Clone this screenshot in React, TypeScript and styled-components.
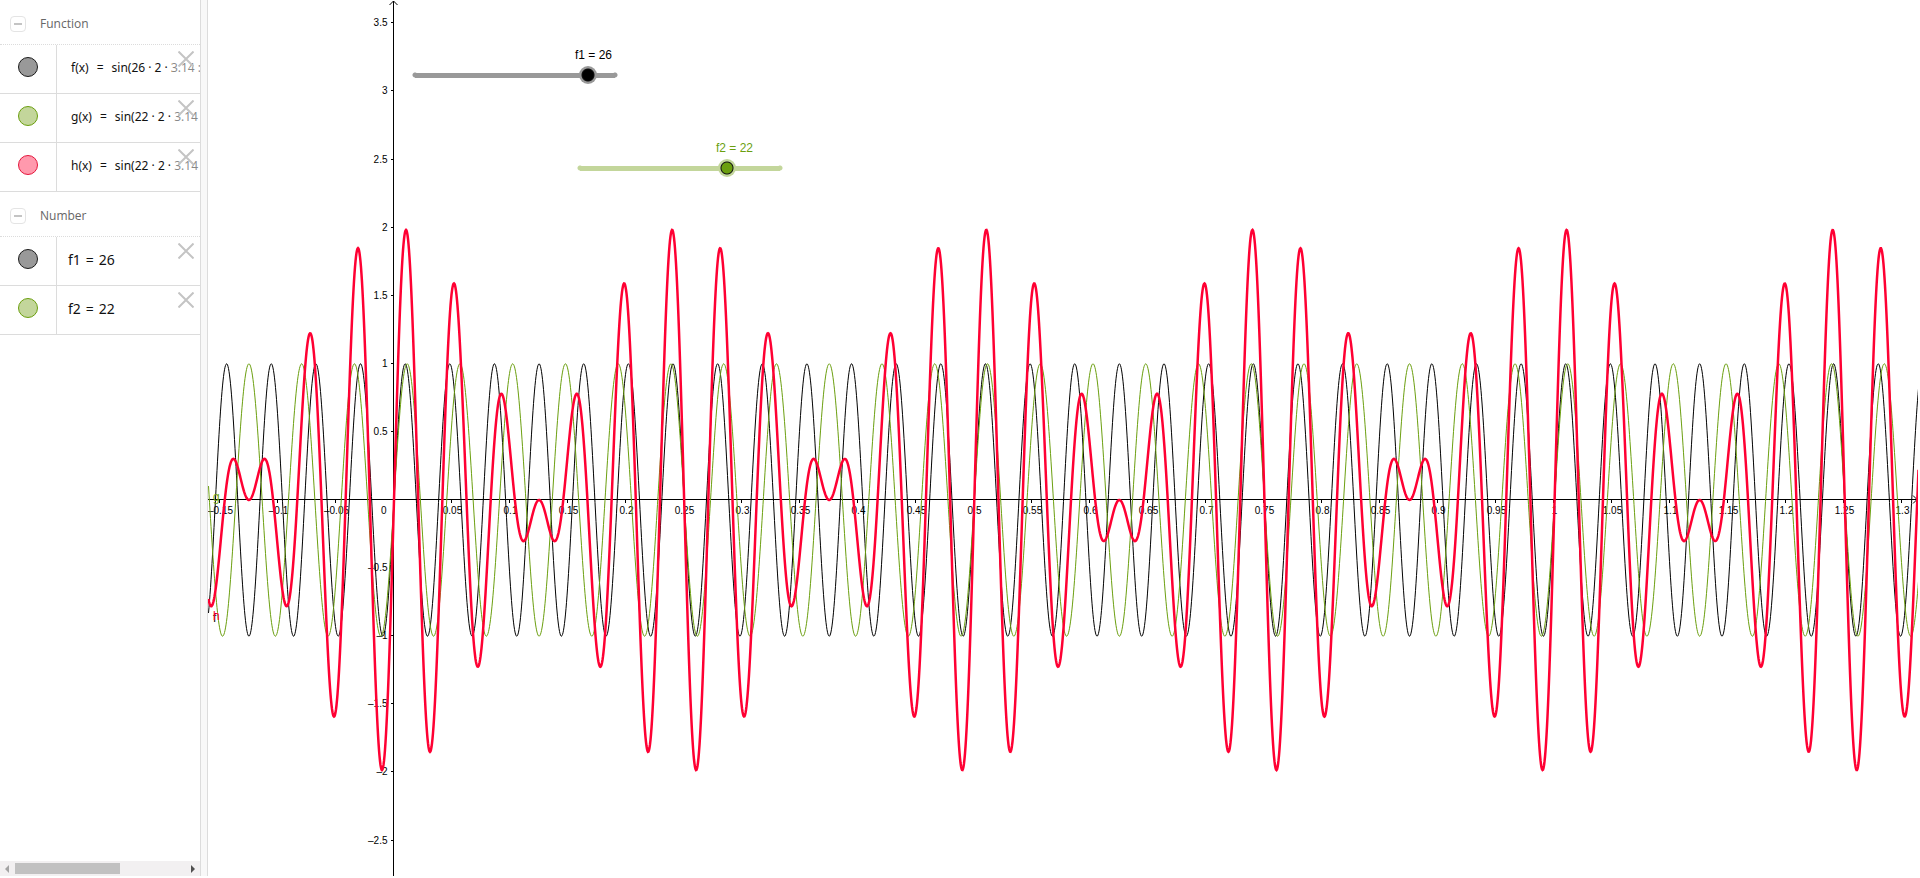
import React, { useEffect, useRef, useState } from "react";
import styled, { createGlobalStyle } from "styled-components";

const GlobalStyle = createGlobalStyle`
  *, *::before, *::after { box-sizing: border-box; }
  body { margin: 0; background: #fff; overflow: hidden; }
`;

const Page = styled.div`
  display: flex;
  height: 100vh;
  padding: 0 2px 2px 0;
  color: #111;
  font-family: "Noto Sans", "Open Sans", sans-serif;
`;

const AlgebraPanel = styled.aside`
  display: flex;
  flex-direction: column;
  justify-content: space-between;
  width: 200px;
  flex: none;
  overflow: hidden;
`;

const Divider = styled.div`
  width: 8px;
  flex: none;
  background: #f8f8f8;
  border: solid #dcdcdc;
  border-width: 0 1px;
`;

const GroupHeader = styled.h2`
  display: flex;
  align-items: center;
  gap: 14px;
  height: 45px;
  margin: 0;
  padding: 4px 0 0 10px;
  border-bottom: 1px dotted #dcdcdc;
  font-family: "Open Sans", sans-serif;
  font-size: 12px;
  line-height: 16px;
  font-weight: 400;
  color: #666;
`;

const CollapseButton = styled.button`
  display: flex;
  align-items: center;
  justify-content: center;
  width: 16px;
  height: 16px;
  padding: 0;
  background: #fff;
  border: 1px solid #e4e4e4;
  border-radius: 4px;

  &::before {
    content: "";
    width: 8px;
    height: 2px;
    background: #c4c4c4;
  }
`;

const List = styled.ul`
  margin: 0;
  padding: 0;
  list-style: none;
`;

const Row = styled.li`
  position: relative;
  display: flex;
  height: 49px;
  border-bottom: 1px solid #dcdcdc;
`;

const MarbleCell = styled.div`
  display: flex;
  align-items: center;
  justify-content: center;
  width: 57px;
  flex: none;
  border-right: 1px solid #dcdcdc;
  padding-bottom: 4px;
`;

const Marble = styled.button<{ $fill: string; $line: string }>`
  width: 20px;
  height: 20px;
  padding: 0;
  border-radius: 50%;
  background: ${(p) => p.$fill};
  border: 1px solid ${(p) => p.$line};
`;

const Formula = styled.div<{ $small?: boolean }>`
  display: flex;
  align-items: center;
  gap: ${(p) => (p.$small ? 8 : 5)}px;
  padding: 0 0 4px ${(p) => (p.$small ? 14 : 11)}px;
  font-size: ${(p) => (p.$small ? 12 : 14)}px;
  white-space: nowrap;
`;

const CloseButton = styled.button`
  position: absolute;
  top: 0;
  right: 0;
  display: flex;
  align-items: center;
  justify-content: center;
  width: 28px;
  height: 48px;
  padding: 0 0 20px;
  border: 0;
  background: rgba(255, 255, 255, 0.5);
`;

const ScrollTrack = styled.div`
  display: flex;
  align-items: center;
  justify-content: space-between;
  height: 15px;
  padding: 0 5px;
  background: #f2f0f1;
`;

const ScrollThumb = styled.div`
  width: 55%;
  height: 11px;
  margin-left: 6px;
  margin-right: auto;
  background: #c1c1c1;
`;

const Graphics = styled.main`
  position: relative;
  flex: 1;
  min-width: 0;
  overflow: hidden;
`;

const Plot = styled.svg`
  display: block;
  width: 100%;
  height: 100%;
  font-family: "Liberation Sans", Arial, sans-serif;
`;

const SliderBox = styled.label<{ $x: number; $y: number; $color: string }>`
  position: absolute;
  left: ${(p) => p.$x}px;
  top: ${(p) => p.$y}px;
  width: 218px;
  height: 38px;
  color: ${(p) => p.$color};
  font: 12px/16px "Liberation Sans", Arial, sans-serif;
`;

const SliderText = styled.span<{ $indent: number }>`
  display: block;
  padding-left: ${(p) => p.$indent}px;
  padding-bottom: 3px;
  white-space: nowrap;
`;

const Range = styled.input<{ $track: string; $ring: string; $dot: string }>`
  appearance: none;
  display: block;
  width: 218px;
  height: 18px;
  margin: 0;
  background: transparent;

  &::-webkit-slider-runnable-track {
    height: 18px;
    background:
      radial-gradient(circle at 9px 9px, ${(p) => p.$track} 2px, transparent 3px),
      radial-gradient(circle at 209px 9px, ${(p) => p.$track} 2px, transparent 3px),
      linear-gradient(${(p) => p.$track}, ${(p) => p.$track}) center / 200px 5px no-repeat;
  }

  &::-webkit-slider-thumb {
    appearance: none;
    width: 18px;
    height: 18px;
    border-radius: 50%;
    background: radial-gradient(circle, ${(p) => p.$dot} 5px, #111 6px, ${(p) => p.$ring} 7px);
  }
`;

const ORIGIN_X = 185.5;
const ORIGIN_Y = 499.5;
const UNIT_X = 1160;
const UNIT_Y = 136.2;
const STEP_X = 58;

const wave = (freq: number) => (x: number) => Math.sin(freq * 2 * 3.14 * x);

function curve(fn: (x: number) => number, width: number) {
  const points: string[] = [];
  for (let px = 0; px <= width; px += 0.5) {
    const y = ORIGIN_Y - fn((px - ORIGIN_X) / UNIT_X) * UNIT_Y;
    points.push(`${px} ${y.toFixed(2)}`);
  }
  return "M" + points.join("L");
}

const label = (n: number) => String(Number(n.toFixed(2))).replace("-", "–");
const rowOf = (i: number) => Math.floor(ORIGIN_Y - (i * UNIT_Y) / 2);

function Axes({ width, height }: { width: number; height: number }) {
  const xs: number[] = [];
  for (let i = Math.ceil(-ORIGIN_X / STEP_X); ORIGIN_X + i * STEP_X < width; i++) if (i) xs.push(i);
  const ys: number[] = [];
  for (let i = -Math.floor((height - ORIGIN_Y) / (UNIT_Y / 2)); rowOf(i) > 8; i++) if (i) ys.push(i);
  const right = width - 1;
  return (
    <g stroke="#000" fill="none" shapeRendering="crispEdges">
      <path d={`M0 ${ORIGIN_Y}H${right}M${ORIGIN_X} 1V${height}`} />
      <path
        d={`M${right - 4} ${ORIGIN_Y - 4}l4 4l-4 4M${ORIGIN_X - 4} 5l4 -4l4 4`}
        shapeRendering="auto"
      />
      {xs.map((i) => (
        <path key={i} d={`M${ORIGIN_X + i * STEP_X} ${ORIGIN_Y}v3`} />
      ))}
      {ys.map((i) => (
        <path key={i} d={`M${ORIGIN_X} ${rowOf(i) + 0.5}h-3`} />
      ))}
      <g stroke="none" fill="#000" fontSize="10">
        {xs.map((i) => (
          <text key={i} x={ORIGIN_X + i * STEP_X + 1} y={514} textAnchor="middle">
            {label(i * 0.05)}
          </text>
        ))}
        <text x={ORIGIN_X - 7} y={514} textAnchor="end">0</text>
        {ys.map((i) => (
          <text key={i} x={ORIGIN_X - 6} y={rowOf(i) + 4} textAnchor="end">
            {label(i * 0.5)}
          </text>
        ))}
      </g>
    </g>
  );
}

function Close({ name }: { name: string }) {
  return (
    <CloseButton aria-label={`Delete ${name}`}>
      <svg width="16" height="16" viewBox="0 0 16 16" stroke="#c4c4c4" strokeWidth="2">
        <path d="M0.500 0.500L15.500 15.500M15.500 0.500L0.500 15.500" />
      </svg>
    </CloseButton>
  );
}

const BLACK = { fill: "#999", line: "#1c1c1c" };
const GREEN = { fill: "#c3d69b", line: "#6b9f0f" };
const RED = { fill: "#ff99ad", line: "#e4173c" };

function Group({ title, children }: { title: string; children: React.ReactNode }) {
  return (
    <section>
      <GroupHeader>
        <CollapseButton aria-label={`Collapse ${title}`} />
        <span>{title}</span>
      </GroupHeader>
      <List>{children}</List>
    </section>
  );
}

interface ItemProps {
  name: string;
  tone: typeof BLACK;
  left: string;
  right: string;
  small?: boolean;
}

function Item({ name, tone, left, right, small }: ItemProps) {
  return (
    <Row>
      <MarbleCell>
        <Marble $fill={tone.fill} $line={tone.line} aria-label={`Show ${name}`} />
      </MarbleCell>
      <Formula $small={small}>
        <span>{left}</span>
        <span>=</span>
        <span>{right}</span>
      </Formula>
      <Close name={name} />
    </Row>
  );
}

export default function App() {
  const host = useRef<HTMLElement>(null);
  const [size, setSize] = useState({ width: 1710, height: 876 });
  const [f1, setF1] = useState(26);
  const [f2, setF2] = useState(22);

  useEffect(() => {
    const el = host.current;
    if (!el) return;
    const observer = new ResizeObserver(() =>
      setSize({ width: el.clientWidth, height: el.clientHeight })
    );
    observer.observe(el);
    return () => observer.disconnect();
  }, []);

  const f = wave(f1);
  const g = wave(f2);

  return (
    <>
      <GlobalStyle />
      <Page>
        <AlgebraPanel>
          <div>
            <Group title="Function">
              <Item small name="f" tone={BLACK} left="f(x)" right={`sin(${f1} · 2 · 3.14 :`} />
              <Item small name="g" tone={GREEN} left="g(x)" right={`sin(${f2} · 2 · 3.14`} />
              <Item small name="h" tone={RED} left="h(x)" right={`sin(${f2} · 2 · 3.14`} />
            </Group>
            <Group title="Number">
              <Item name="f1" tone={BLACK} left="f1" right={`${f1}`} />
              <Item name="f2" tone={GREEN} left="f2" right={`${f2}`} />
            </Group>
          </div>
          <ScrollTrack>
            <svg width="4" height="8"><path d="M4 0V8L0 4Z" fill="#a3a3a3" /></svg>
            <ScrollThumb />
            <svg width="4" height="8"><path d="M0 0V8L4 4Z" fill="#505050" /></svg>
          </ScrollTrack>
        </AlgebraPanel>
        <Divider />
        <Graphics ref={host}>
          <Plot>
            <Axes width={size.width} height={size.height} />
            <g fill="none" transform="translate(0.5 0.5)">
              <path d={curve(f, size.width)} stroke="#000" />
              <path d={curve(g, size.width)} stroke="#6b9f0f" />
              <path d={curve((x) => f(x) + g(x), size.width)} stroke="#ff0033" strokeWidth="2.5" />
            </g>
            <g fontSize="12">
              <text x="5" y="622">f</text>
              <text x="5" y="501" fill="#6b9f0f">g</text>
              <text x="5" y="620" fill="#ff0033">h</text>
            </g>
          </Plot>
          <SliderBox $x={198} $y={47} $color="#000">
            <SliderText $indent={169}>f1 = {f1}</SliderText>
            <Range type="range" min={0} max={30} value={f1} $track="#999" $ring="#999" $dot="#000"
              onChange={(e) => setF1(Number(e.target.value))} />
          </SliderBox>
          <SliderBox $x={363} $y={140} $color="#6b9f0f">
            <SliderText $indent={145}>f2 = {f2}</SliderText>
            <Range type="range" min={0} max={30} value={f2} $track="#c3d69b" $ring="#c3d69b" $dot="#6b9f0f"
              onChange={(e) => setF2(Number(e.target.value))} />
          </SliderBox>
        </Graphics>
      </Page>
    </>
  );
}
